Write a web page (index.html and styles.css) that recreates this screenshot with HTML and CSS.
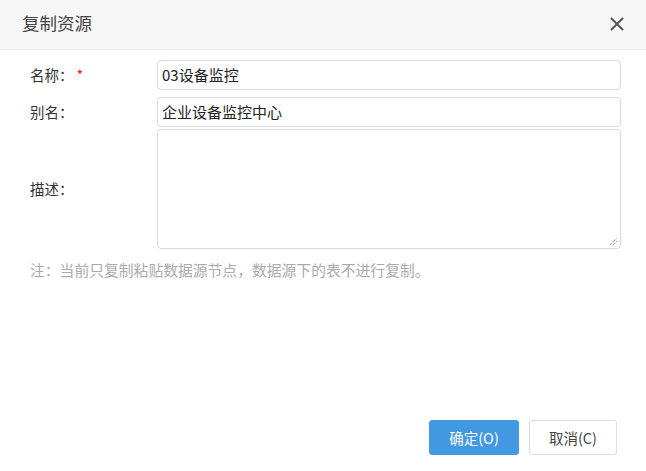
FILE: index.html
```html
<!DOCTYPE html>
<html lang="zh">
<head>
<meta charset="utf-8">
<link rel="stylesheet" href="styles.css">
</head>
<body>
<div class="dialog">
  <div class="header">
    <span class="title">复制资源</span>
    <span class="close">
      <svg width="14" height="14" viewBox="0 0 14 14"><path d="M1 1L13 13M13 1L1 13" stroke="#555" stroke-width="2" fill="none"/></svg>
    </span>
  </div>
  <div class="body">
    <div class="row r1">
      <label class="lbl">名称：<span class="req">*</span></label>
      <div class="field">03设备监控</div>
    </div>
    <div class="row r2">
      <label class="lbl">别名：</label>
      <div class="field">企业设备监控中心</div>
    </div>
    <div class="row r3">
      <label class="lbl">描述：</label>
      <div class="area">
        <svg class="grip" width="9" height="9" viewBox="0 0 9 9"><path d="M1 8L8 1M4 8L8 4" stroke="#555" stroke-width="1" stroke-dasharray="1 1" fill="none"/></svg>
      </div>
    </div>
    <div class="note">注：当前只复制粘贴数据源节点，数据源下的表不进行复制。</div>
  </div>
  <div class="footer">
    <button class="btn primary">确定(O)</button>
    <button class="btn">取消(C)</button>
  </div>
</div>
</body>
</html>
```

FILE: styles.css
```css
html, body {
  margin: 0;
  padding: 0;
  background: #fff;
}
body {
  font-family: "Noto Sans CJK SC", "Liberation Sans", sans-serif;
  font-size: 14px;
  color: #333;
}
.dialog {
  width: 646px;
  height: 471px;
  display: flex;
  flex-direction: column;
  box-sizing: border-box;
}
.header {
  height: 50px;
  box-sizing: border-box;
  background: #f7f7f7;
  border-bottom: 1px solid #e8e8e8;
  display: flex;
  align-items: center;
  justify-content: space-between;
  padding: 0 22px 0 22px;
}
.title {
  font-size: 17.5px;
  color: #444;
  margin-top: -4px;
}
.close {
  display: flex;
  margin-top: -2px;
}
.body {
  flex: 1;
  padding: 10px 25px 0 30px;
}
.row {
  display: grid;
  grid-template-columns: 127px 464px;
  align-items: center;
}
.r1 { height: 30px; margin-bottom: 7px; }
.r2 { height: 30px; margin-bottom: 2px; }
.r3 { height: 120px; }
.lbl {
  color: #333;
  line-height: 20px;
  font-size: 14.5px;
}
.req {
  color: #f5222d;
  margin-left: 3px;
}
.field {
  height: 30px;
  box-sizing: border-box;
  border: 1px solid #d9d9d9;
  border-radius: 4px;
  padding: 0 4px;
  line-height: 28px;
  font-size: 15px;
  color: #222;
}
.area {
  height: 120px;
  box-sizing: border-box;
  border: 1px solid #d9d9d9;
  border-radius: 4px;
  position: relative;
}
.grip {
  position: absolute;
  right: 2px;
  bottom: 2px;
}
.note {
  margin-top: 11px;
  color: #aaa;
  line-height: 20px;
  font-size: 14.8px;
}
.footer {
  display: flex;
  justify-content: flex-end;
  gap: 10px;
  padding: 0 29px 16px 0;
}
.btn {
  font-family: "Noto Sans CJK SC", "Liberation Sans", sans-serif;
  font-size: 14.5px;
  height: 35px;
  width: 88px;
  box-sizing: border-box;
  border: 1px solid #dcdcdc;
  border-radius: 3px;
  background: #fff;
  color: #444;
  padding: 0;
}
.btn.primary {
  width: 90px;
  background: #4299e1;
  border-color: #4299e1;
  color: #fff;
}
```
